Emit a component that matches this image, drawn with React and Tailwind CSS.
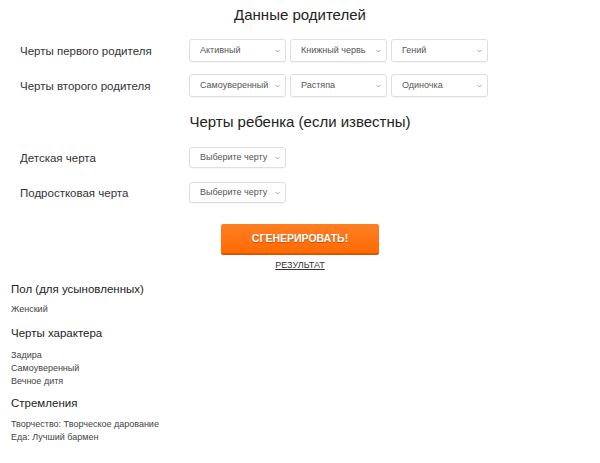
const PARENT_ROWS = [
  { label: "Черты первого родителя", values: ["Активный", "Книжный червь", "Гений"] },
  { label: "Черты второго родителя", values: ["Самоуверенный", "Растяпа", "Одиночка"] },
];

const CHILD_ROWS = ["Детская черта", "Подростковая черта"];

function Select({ value, h = "h-[23px]" }) {
  return (
    <div className={"relative w-[97px] " + h}>
      <select
        defaultValue={value}
        className="block h-full w-full appearance-none rounded-[3px] border border-[#dedede] bg-white pl-[10px] pr-4 text-[9px] text-[#555] shadow-[0_1px_1px_rgba(0,0,0,0.04)] outline-none"
      >
        <option>{value}</option>
      </select>
      <svg
        className="pointer-events-none absolute right-[6px] top-1/2 -translate-y-1/2"
        width="5"
        height="3"
        viewBox="0 0 5 3"
      >
        <path d="M0.5 0.5 L2.5 2.5 L4.5 0.5" fill="none" stroke="#999" strokeWidth="0.9" />
      </svg>
    </div>
  );
}

function Row({ label, children, className }) {
  return (
    <div className={"flex items-center " + className}>
      <div className="w-[189px] pl-5 text-[11.5px] leading-[14px] text-[#333]">{label}</div>
      <div className="flex gap-[4px]">{children}</div>
    </div>
  );
}

export default function App() {
  return (
    <div className="min-h-[463px] w-[600px] bg-white font-['Liberation_Sans',Arial,sans-serif] text-[#222]">
      <h2 className="pt-[5px] text-center text-[15px] leading-[20px]">Данные родителей</h2>

      {PARENT_ROWS.map((r, i) => (
        <Row key={r.label} label={r.label} className={i === 0 ? "mt-[14px]" : "mt-[12px]"}>
          {r.values.map((v) => (
            <Select key={v} value={v} />
          ))}
        </Row>
      ))}

      <h2 className="mt-[15px] text-center text-[15px] leading-[20px]">Черты ребенка (если известны)</h2>

      {CHILD_ROWS.map((label, i) => (
        <Row key={label} label={label} className={i === 0 ? "mt-[15px]" : "mt-[14px]"}>
          <Select value="Выберите черту" h="h-[21px]" />
        </Row>
      ))}

      <div className="mt-[21px] flex flex-col items-center">
        <button className="h-[31px] w-[158px] rounded-[2px] border-b-2 border-[#d95500] bg-gradient-to-b from-[#ff7f22] to-[#ff6a00] text-[10.5px] font-bold text-white [text-shadow:0_1px_1px_rgba(0,0,0,0.3)]">
          СГЕНЕРИРОВАТЬ!
        </button>
        <a className="mt-[4px] text-[9px] leading-[12px] text-[#333] underline">РЕЗУЛЬТАТ</a>
      </div>

      <div className="pl-[11px]">
        <h3 className="mt-[11px] text-[11.5px] leading-[15px] text-[#222]">Пол (для усыновленных)</h3>
        <p className="mt-[6px] text-[9px] leading-[12px] text-[#444]">Женский</p>

        <h3 className="mt-[11px] text-[11.5px] leading-[15px] text-[#222]">Черты характера</h3>
        <div className="mt-[8px] text-[9px] leading-[13px] text-[#444]">
          <p>Задира</p>
          <p>Самоуверенный</p>
          <p>Вечное дитя</p>
        </div>

        <h3 className="mt-[8px] text-[11.5px] leading-[15px] text-[#222]">Стремления</h3>
        <div className="mt-[7px] text-[9px] leading-[13px] text-[#444]">
          <p>Творчество: Творческое дарование</p>
          <p>Еда: Лучший бармен</p>
        </div>
      </div>
    </div>
  );
}
